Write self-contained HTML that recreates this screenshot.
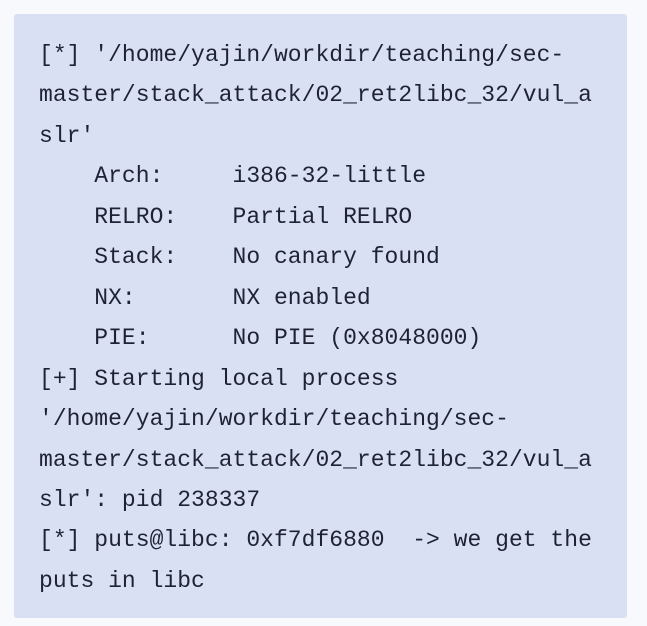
<!DOCTYPE html>
<html><head><style>
html,body{margin:0;padding:0;background:#f8f9fc;width:647px;height:626px;overflow:hidden}
.box{position:absolute;left:14px;top:14px;width:613px;height:604px;background:#dae0f4;border-radius:3px}
pre{margin:0;position:absolute;left:25px;top:21px;font-family:"Liberation Mono",monospace;font-size:23px;letter-spacing:0.02px;line-height:40.45px;color:#1f2233;white-space:pre}
</style></head><body>
<div class="box"><pre>[*] '/home/yajin/workdir/teaching/sec-
master/stack_attack/02_ret2libc_32/vul_a
slr'
    Arch:     i386-32-little
    RELRO:    Partial RELRO
    Stack:    No canary found
    NX:       NX enabled
    PIE:      No PIE (0x8048000)
[+] Starting local process
'/home/yajin/workdir/teaching/sec-
master/stack_attack/02_ret2libc_32/vul_a
slr': pid 238337
[*] puts@libc: 0xf7df6880  -> we get the
puts in libc</pre></div>
</body></html>
